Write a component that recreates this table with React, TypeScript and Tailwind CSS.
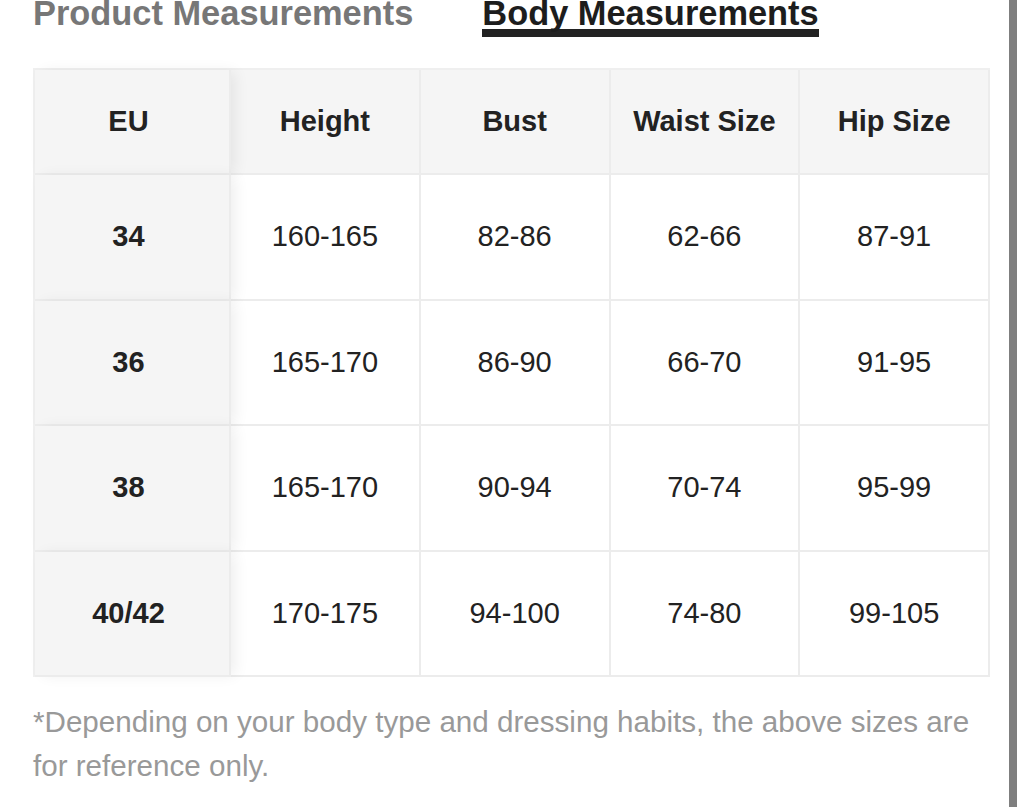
const headers = ['EU', 'Height', 'Bust', 'Waist Size', 'Hip Size'];

const rows = [
  ['34', '160-165', '82-86', '62-66', '87-91'],
  ['36', '165-170', '86-90', '66-70', '91-95'],
  ['38', '165-170', '90-94', '70-74', '95-99'],
  ['40/42', '170-175', '94-100', '74-80', '99-105'],
];

const firstCol =
  'relative z-10 bg-[#f5f5f5] pr-[7px] font-bold shadow-[6px_0_14px_-2px_rgba(0,0,0,0.07)]';

export default function App() {
  return (
    <div
      className="flex h-[807px] w-[1024px] overflow-hidden bg-white text-[#222]"
      style={{ fontFamily: '"Liberation Sans", Arial, Helvetica, sans-serif' }}
    >
      <div className="flex-1 pl-[33px] pr-[19px]">
        {/* tabs */}
        <div className="-mt-[2px] flex gap-[69px] text-[34.4px] font-bold leading-[31px]">
          <div className="text-[#777]">Product Measurements</div>
          <div className="border-b-[8px] border-[#222] text-[#1d1d1d]">Body Measurements</div>
        </div>

        {/* size table */}
        <div className="mt-[31px] grid w-[957px] grid-cols-[196px_repeat(4,1fr)] border-l-2 border-t-2 border-[#efefef] text-[29px]">
          {headers.map((h, i) => (
            <div
              key={h}
              className={
                'flex h-[105px] items-center justify-center border-b-2 border-r-2 border-[#ececec] font-bold ' +
                (i === 0 ? firstCol : 'bg-[#f5f5f5]')
              }
            >
              {h}
            </div>
          ))}
          {rows.map((r) =>
            r.map((c, i) => (
              <div
                key={r[0] + i}
                className={
                  'flex h-[125.5px] items-center justify-center border-b-2 border-r-2 border-[#ececec] ' +
                  (i === 0 ? firstCol : 'bg-white')
                }
              >
                {c}
              </div>
            ))
          )}
        </div>

        <p className="mt-[23px] w-[957px] text-[29.6px] leading-[44px] text-[#999]">
          *Depending on your body type and dressing habits, the above sizes are for reference only.
        </p>
      </div>

      {/* scrollbar edge */}
      <div className="w-[8px] bg-[#7f7f7f]" />
      <div className="w-[7px] bg-white" />
    </div>
  );
}
